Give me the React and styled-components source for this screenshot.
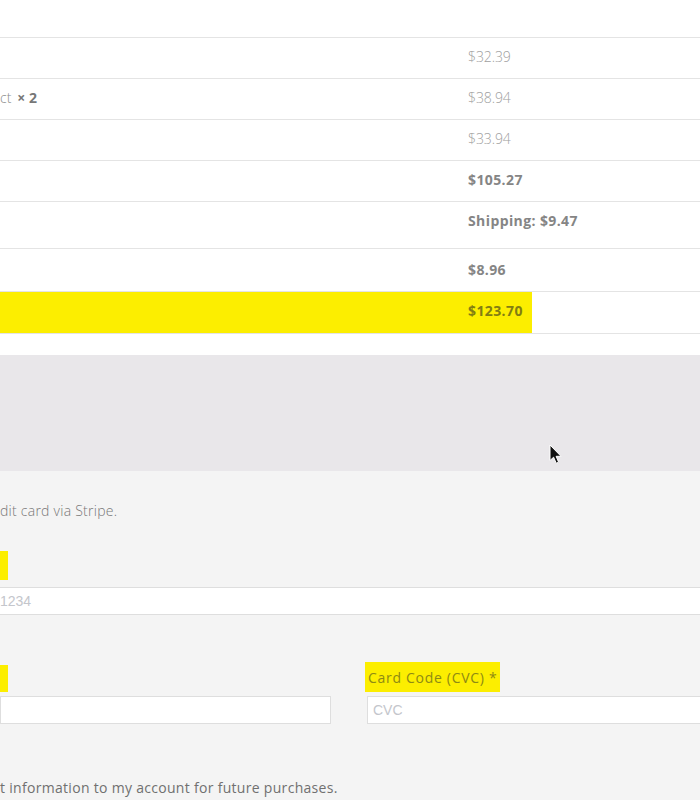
import styled, { createGlobalStyle } from 'styled-components';

const GlobalStyle = createGlobalStyle`
  html, body {
    margin: 0;
    padding: 0;
    background: #fff;
    overflow: hidden;
  }
  body {
    width: 700px;
    height: 800px;
    font-family: 'Open Sans', 'Liberation Sans', sans-serif;
  }
`;

const ORDER_ROWS = [
  { name: '', price: '$32.39', height: 41, pt: 9 },
  { name: 'ct', qty: '× 2', price: '$38.94', height: 41, pt: 9 },
  { name: '', price: '$33.94', height: 41, pt: 9 },
  { name: '', price: '$105.27', height: 41, pt: 9, bold: true },
  { name: '', price: 'Shipping: $9.47', height: 47, pt: 9, bold: true },
  { name: '', price: '$8.96', height: 43, pt: 11, bold: true },
  { name: '', price: '$123.70', height: 42, pt: 9, bold: true, total: true },
];

const App = () => {
  return (
    <Page>
      <GlobalStyle />
      <OrderTable>
        <Row $height={38} $pt={9} />
        {ORDER_ROWS.map((row, i) => (
          <Row key={i} $height={row.height} $pt={row.pt} $total={row.total}>
            <NameCell>
              {row.name}
              {row.qty && <Qty>{row.qty}</Qty>}
            </NameCell>
            <PriceCell $bold={row.bold} $total={row.total}>
              {row.price}
            </PriceCell>
          </Row>
        ))}
      </OrderTable>

      <Spacer />
      <NoticeBand />

      <PaymentBox>
        <Description>dit card via Stripe.</Description>

        <Field $top={30} $gap={7}>
          <Label $stub $h={29} />
          <Input $wide placeholder='1234' readOnly />
        </Field>

        <FieldGrid>
          <Field $gap={4}>
            <Label $stub $h={27} />
            <Input readOnly />
          </Field>
          <Field $gap={4}>
            <Label $h={30}>Card Code (CVC) *</Label>
            <Input placeholder='CVC' readOnly />
          </Field>
        </FieldGrid>

        <SaveText>t information to my account for future purchases.</SaveText>
      </PaymentBox>

      <Cursor width='14' height='22' viewBox='0 0 14 22'>
        <path
          d='M1 1 L1 16.5 L4.6 13.2 L7.2 19.2 L9.6 18.2 L7.1 12.3 L12 12.3 Z'
          fill='#111'
          stroke='#fff'
          strokeWidth='1'
          strokeLinejoin='round'
        />
      </Cursor>
    </Page>
  );
};

const Page = styled.div`
  position: relative;
  width: 700px;
  height: 800px;
  overflow: hidden;
  background: #fff;
`;

const OrderTable = styled.div`
  display: flex;
  flex-direction: column;
`;

const Row = styled.div`
  display: grid;
  grid-template-columns: 468px 1fr;
  align-items: start;
  box-sizing: border-box;
  height: ${p => p.$height}px;
  padding-top: ${p => p.$pt}px;
  border-bottom: 1px solid #e4e4e4;
  background: ${p =>
    p.$total ? 'linear-gradient(to right, #fcee00 532px, transparent 532px)' : 'transparent'};
  font-size: 14px;
  line-height: 20px;
`;

const NameCell = styled.div`
  color: #8a8a8a;
  font-weight: 300;
`;

const Qty = styled.strong`
  margin-left: 6px;
  color: #777;
  font-weight: 700;
`;

const PriceCell = styled.div`
  color: ${p => (p.$total ? '#827d12' : p.$bold ? '#858585' : '#a0a0a0')};
  font-weight: ${p => (p.$bold ? 700 : 300)};
  letter-spacing: ${p => (p.$bold ? '0.4px' : '-0.1px')};
`;

const Spacer = styled.div`
  height: 21px;
`;

const NoticeBand = styled.div`
  height: 116px;
  background: #e9e7ea;
`;

const PaymentBox = styled.div`
  display: flex;
  flex-direction: column;
  height: 329px;
  padding-top: 30px;
  box-sizing: border-box;
  background: #f4f4f4;
`;

const Description = styled.p`
  margin: 0;
  font-size: 14px;
  line-height: 20px;
  font-weight: 300;
  letter-spacing: 0.25px;
  color: #777;
`;

const Field = styled.div`
  display: flex;
  flex-direction: column;
  gap: ${p => p.$gap}px;
  margin-top: ${p => p.$top || 0}px;
`;

const FieldGrid = styled.div`
  display: grid;
  grid-template-columns: 331px 345px;
  column-gap: 36px;
  align-items: end;
  margin-top: 47px;
`;

const Label = styled.label`
  align-self: flex-start;
  box-sizing: border-box;
  height: ${p => p.$h}px;
  width: ${p => (p.$stub ? '8px' : 'auto')};
  margin-left: ${p => (p.$stub ? '0' : '-2px')};
  padding: 6px 3px 0 3px;
  background: #fcee00;
  font-size: 14px;
  line-height: 20px;
  letter-spacing: 0.7px;
  color: #8e8a14;
  white-space: nowrap;
`;

const Input = styled.input`
  box-sizing: border-box;
  width: ${p => (p.$wide ? '720px' : '100%')};
  height: 28px;
  margin: 0;
  margin-left: ${p => (p.$wide ? '-10px' : '0')};
  padding: 0 ${p => (p.$wide ? '0 0 9px' : '5px')};
  border: 1px solid #dedede;
  background: #fff;
  font-family: 'Liberation Sans', Arial, sans-serif;
  font-size: 14px;
  color: #333;
  outline: none;
  &::placeholder {
    color: #c4c6cc;
  }
`;

const SaveText = styled.p`
  margin: 54px 0 0;
  font-size: 14px;
  line-height: 20px;
  letter-spacing: 0.3px;
  color: #707070;
`;

const Cursor = styled.svg`
  position: absolute;
  left: 549px;
  top: 444px;
`;

export default App;
